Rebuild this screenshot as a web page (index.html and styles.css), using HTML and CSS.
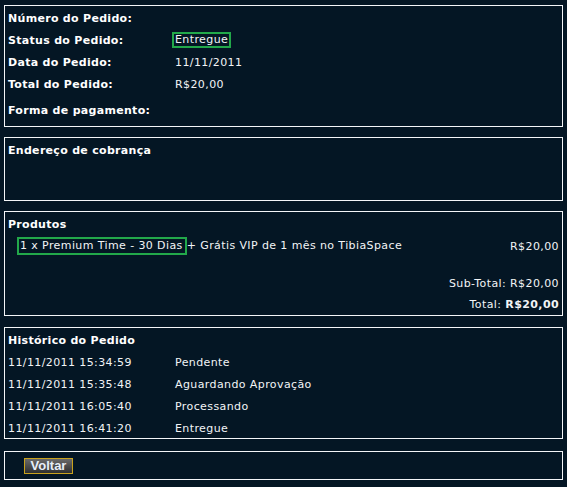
FILE: index.html
```html
<!DOCTYPE html>
<html lang="pt-BR">
<head>
<meta charset="utf-8">
<title>Pedido</title>
<link rel="stylesheet" href="styles.css">
</head>
<body>
<div class="page">
  <section class="box info">
    <div class="row"><span class="label">Número do Pedido:</span><span class="value"></span></div>
    <div class="row"><span class="label">Status do Pedido:</span><span class="value"><span class="hl hl-status">Entregue</span></span></div>
    <div class="row"><span class="label">Data do Pedido:</span><span class="value">11/11/2011</span></div>
    <div class="row"><span class="label">Total do Pedido:</span><span class="value">R$20,00</span></div>
    <div class="row row-gap"><span class="label">Forma de pagamento:</span><span class="value"></span></div>
  </section>

  <section class="box address">
    <div class="row"><span class="label">Endereço de cobrança</span></div>
  </section>

  <section class="box products">
    <div class="row"><span class="label">Produtos</span></div>
    <div class="row product">
      <span class="pname"><span class="hl hl-prod">1 x Premium Time - 30 Dias</span>+ Grátis VIP de 1 mês no TibiaSpace</span>
      <span class="price">R$20,00</span>
    </div>
    <div class="totals">
      <div class="row right"><span>Sub-Total: R$20,00</span></div>
      <div class="row right"><span>Total: <b>R$20,00</b></span></div>
    </div>
  </section>

  <section class="box history">
    <div class="row"><span class="label">Histórico do Pedido</span></div>
    <div class="row"><span class="col">11/11/2011 15:34:59</span><span>Pendente</span></div>
    <div class="row"><span class="col">11/11/2011 15:35:48</span><span>Aguardando Aprovação</span></div>
    <div class="row"><span class="col">11/11/2011 16:05:40</span><span>Processando</span></div>
    <div class="row"><span class="col">11/11/2011 16:41:20</span><span>Entregue</span></div>
  </section>

  <section class="box actions">
    <button class="btn" type="button">Voltar</button>
  </section>
</div>
</body>
</html>
```

FILE: styles.css
```css
html, body {
  margin: 0;
  padding: 0;
  background: #041624;
}
body {
  font-family: "DejaVu Sans", Verdana, sans-serif;
  font-size: 11px;
  letter-spacing: 0.4px;
  color: #f2f4f6;
}
.page {
  width: 559px;
  padding: 5px 0 0 4px;
  display: flex;
  flex-direction: column;
}
.box {
  border: 1px solid #f4f6f8;
  padding: 0 3px;
  display: flex;
  flex-direction: column;
}
.row {
  display: flex;
  align-items: center;
  box-sizing: border-box;
  height: 22px;
  padding-top: 2px;
  white-space: nowrap;
}
.label {
  font-weight: bold;
  letter-spacing: 0.3px;
  color: #ffffff;
  width: 167px;
  flex: none;
}
.col {
  width: 167px;
  flex: none;
}
.info { padding-bottom: 6px; }
.row-gap { margin-top: 4px; }
.address { height: 62px; margin-top: 10px; }
.products { margin-top: 10px; padding-bottom: 1px; }
.history { margin-top: 11px; }
.actions { margin-top: 12px; }
.hl {
  border: 2px solid #22a84a;
  display: inline-block;
  line-height: 12px;
}
.hl-status {
  margin-left: -3px;
  padding: 0 1px 0 1px;
}
.hl-prod {
  padding: 1px 2px 1px 1px;
}
.product {
  justify-content: space-between;
  padding-left: 9px;
}
.totals {
  margin-top: 16px;
  height: 42px;
  display: flex;
  flex-direction: column;
}
.totals .row { height: 21px; }
.right { justify-content: flex-end; }
.actions {
  height: 29px;
  box-sizing: border-box;
  justify-content: center;
  padding-left: 19px;
}
.btn {
  align-self: flex-start;
  width: 49px;
  height: 16px;
  padding: 0;
  margin: 0;
  border: 1px solid #c9a21c;
  background: linear-gradient(#6a6a6a, #2e2e2e);
  color: #e6eef8;
  font-family: "Liberation Sans", Arial, sans-serif;
  font-weight: bold;
  font-size: 13px;
  letter-spacing: 0;
  line-height: 14px;
}
```
